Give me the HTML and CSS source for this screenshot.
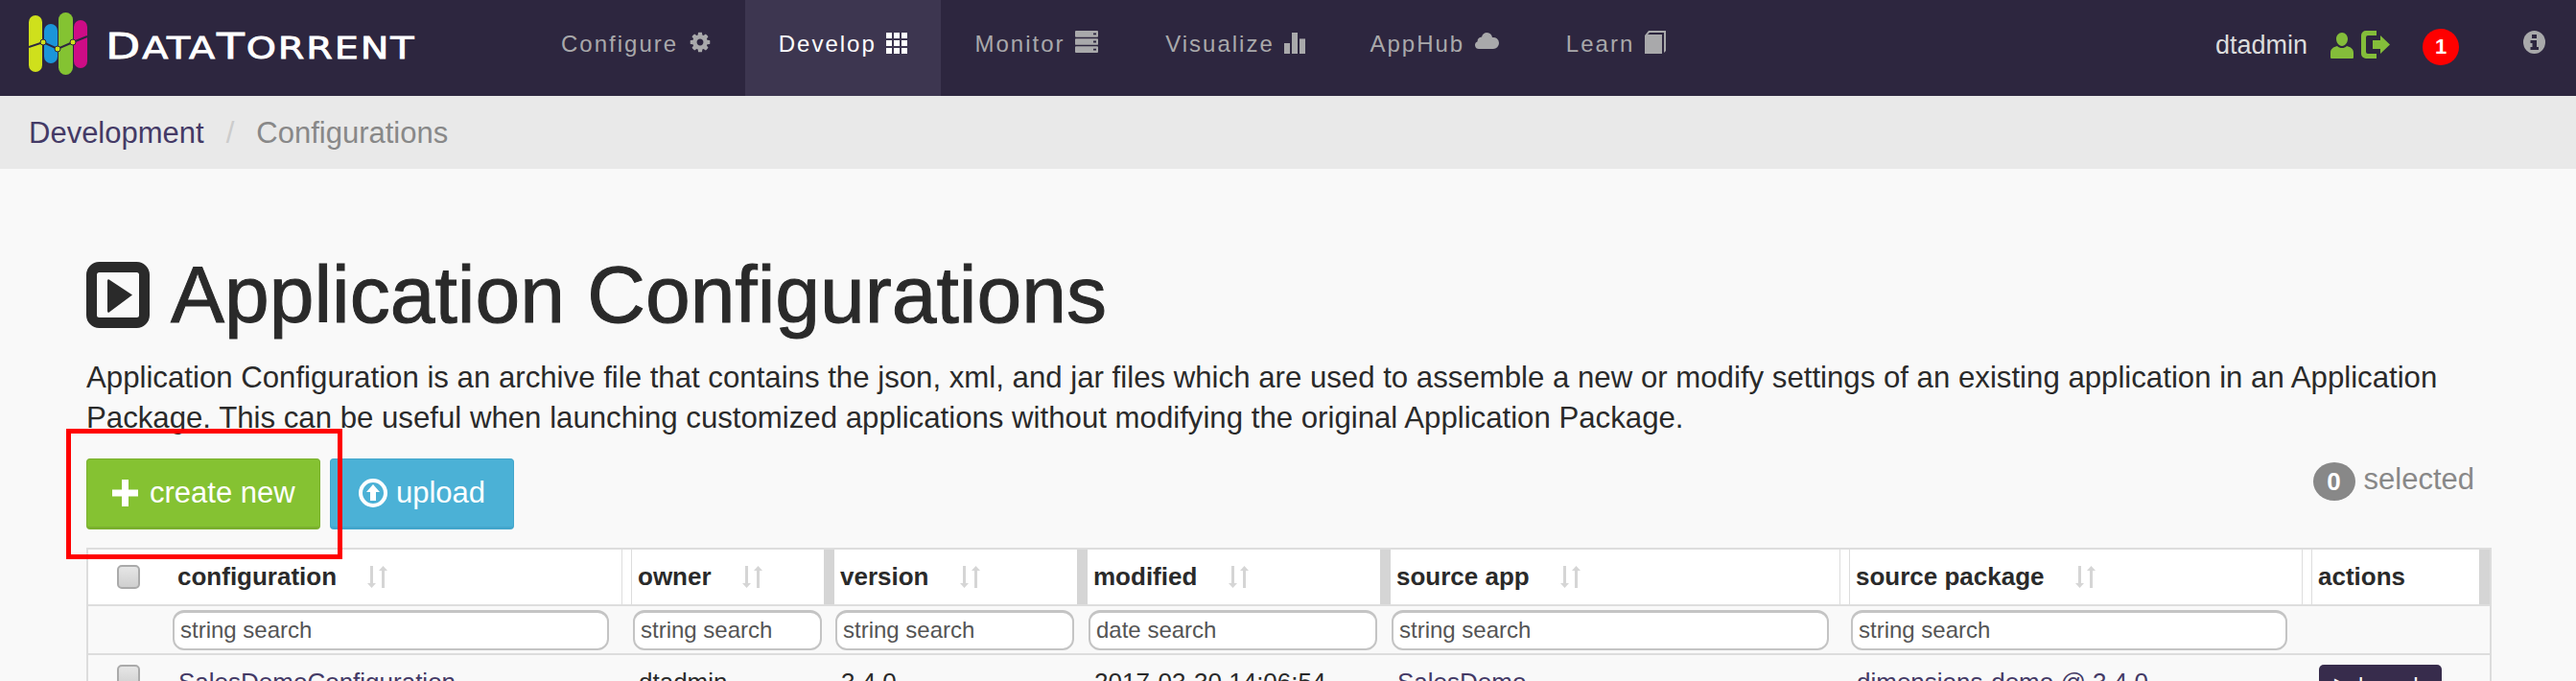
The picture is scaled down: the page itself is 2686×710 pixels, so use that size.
FILE: index.html
```html
<!DOCTYPE html>
<html lang="en">
<head>
  <meta charset="UTF-8">
  <title>Application Configurations</title>
  <link rel="stylesheet" href="styles.css">
</head>
<body>
  <nav class="navbar">
    <a class="brand">
      <svg class="brand-mark" width="62" height="68" viewBox="0 0 62 68">
        <rect x="0" y="3" width="14" height="59" rx="7" fill="#cfe01c"/>
        <rect x="16" y="12" width="14" height="41" rx="7" fill="#1b95d9"/>
        <rect x="31" y="0" width="15" height="65" rx="7.500" fill="#84c332"/>
        <rect x="47" y="8" width="14" height="50" rx="7" fill="#ce0c86"/>
        <polyline points="0,36 15,31 30,38 46,31 61,25" fill="none" stroke="#2d263f" stroke-width="2"/>
        <circle cx="15" cy="31" r="3" fill="#cfe01c" stroke="#2d263f"/>
        <circle cx="30" cy="38" r="3" fill="#cfe01c" stroke="#2d263f"/>
        <circle cx="46" cy="31" r="3" fill="#cfe01c" stroke="#2d263f"/>
      </svg>
      <span class="brand-name"><span class="brand-cap">D</span>ATA<span class="brand-cap">T</span>ORRENT</span>
    </a>
    <ul class="nav-links">
      <li class="nav-item">Configure
        <svg class="nav-icon nav-icon-up" width="24" height="24" viewBox="0 0 1792 1792"><path fill="currentColor" d="M1152 896q0-106-75-181t-181-75-181 75-75 181 75 181 181 75 181-75 75-181zm512-109v222q0 12-8 23t-20 13l-185 28q-19 54-39 91 35 50 107 138 10 12 10 25t-9 23q-27 37-99 108t-94 71q-12 0-26-9l-138-108q-44 23-91 38-16 136-29 186-7 28-36 28h-222q-14 0-24.500-8.500t-11.500-21.500l-28-184q-49-16-90-37l-141 107q-10 9-25 9-14 0-25-11-126-114-165-168-7-10-7-23 0-12 8-23 15-21 51-66.500t54-70.500q-27-50-41-99l-183-27q-13-2-21-12.500t-8-23.500v-222q0-12 8-23t19-13l186-28q14-46 39-92-40-57-107-138-10-12-10-24 0-10 9-23 26-36 98.500-107.500t94.500-71.500q13 0 26 10l138 107q44-23 91-38 16-136 29-186 7-28 36-28h222q14 0 24.500 8.500t11.500 21.500l28 184q49 16 90 37l142-107q9-9 24-9 13 0 25 10 129 119 165 170 7 8 7 22 0 12-8 23-15 21-51 66.500t-54 70.500q26 50 41 98l183 28q13 2 21 12.500t8 23.500z"/></svg>
      </li>
      <li class="nav-item active">Develop
        <svg class="nav-icon" width="22" height="22" viewBox="0 0 22 22" fill="currentColor">
          <rect width="6" height="6"/><rect x="8" width="6" height="6"/><rect x="16" width="6" height="6"/>
          <rect y="8" width="6" height="6"/><rect x="8" y="8" width="6" height="6"/><rect x="16" y="8" width="6" height="6"/>
          <rect y="16" width="6" height="6"/><rect x="8" y="16" width="6" height="6"/><rect x="16" y="16" width="6" height="6"/>
        </svg>
      </li>
      <li class="nav-item">Monitor
        <svg class="nav-icon nav-icon-up" width="24" height="23" viewBox="0 0 24 24" preserveAspectRatio="none">
          <path fill="currentColor" fill-rule="evenodd" d="M1 0h22a1 1 0 0 1 1 1v5a1 1 0 0 1-1 1H1a1 1 0 0 1-1-1V1a1 1 0 0 1 1-1zm18 2.500v2h3v-2zM1 8.500h22a1 1 0 0 1 1 1v5a1 1 0 0 1-1 1H1a1 1 0 0 1-1-1v-5a1 1 0 0 1 1-1zm18 2.500v2h3v-2zM1 17h22a1 1 0 0 1 1 1v5a1 1 0 0 1-1 1H1a1 1 0 0 1-1-1v-5a1 1 0 0 1 1-1zm18 2.500v2h3v-2z"/>
        </svg>
      </li>
      <li class="nav-item">Visualize
        <svg class="nav-icon" width="22" height="22" viewBox="0 0 22 24" preserveAspectRatio="none" fill="currentColor">
          <rect x="0" y="12" width="6" height="12"/><rect x="8" y="0" width="6" height="24"/><rect x="16" y="7" width="6" height="17"/>
        </svg>
      </li>
      <li class="nav-item nav-item-tight">AppHub
        <svg class="nav-icon" width="25" height="17" viewBox="0 0 25 17">
          <path fill="currentColor" d="M4 17a4 4 0 0 1-1.500-7.700A5 5 0 0 1 7 4.500 6 6 0 0 1 12.500 0 6 6 0 0 1 18 5a6 6 0 0 1 7 6 6 6 0 0 1-6 6z"/>
        </svg>
      </li>
      <li class="nav-item">Learn
        <svg class="nav-icon nav-icon-up" width="22" height="24" viewBox="0 0 22 24">
          <path fill="currentColor" d="M0 5l4-5h18v21l-2 2V2H5L3 4h15v20H0z"/>
        </svg>
      </li>
    </ul>
    <div class="nav-user">
      <span class="user-name">dtadmin</span>
      <svg class="user-icon" width="24" height="27" viewBox="0 0 24 27">
        <path fill="#84bd3a" d="M12 0c3.500 0 6 3 6 6.500S15.500 14 12 14 6 10 6 6.500 8.500 0 12 0zM7 14c1.500 1.500 3 2 5 2s3.500-.5 5-2c4 1 7 3 7 7v4.500c0 1-.5 1.500-1.500 1.500h-21C.5 27 0 26.500 0 25.500V21c0-4 3-6 7-7z"/>
      </svg>
      <svg class="logout-icon" width="30" height="29" viewBox="0 0 30 29">
        <path fill="#84bd3a" d="M5 0h11v5H7a2 2 0 0 0-2 2v15a2 2 0 0 0 2 2h9v5H5a5 5 0 0 1-5-5V5a5 5 0 0 1 5-5z"/>
        <path fill="#84bd3a" d="M12 10h8V5l10 9.500L20 24v-5h-8z"/>
      </svg>
      <span class="alert-badge">1</span>
      <svg class="info-icon" width="23" height="24" viewBox="0 0 23 24">
        <ellipse cx="11.500" cy="12" rx="11.500" ry="12" fill="#a9a9ab"/>
        <path fill="#2d263f" d="M9 4h5v4H9zM7.500 10H14v7h2v3H7.500v-3h2v-4h-2z"/>
      </svg>
    </div>
  </nav>

  <div class="breadcrumb">
    <a class="crumb-link">Development</a>
    <span class="crumb-sep">/</span>
    <span class="crumb-current">Configurations</span>
  </div>

  <main class="content">
    <h1 class="page-title">
      <svg width="66" height="69" viewBox="0 0 66 69">
        <rect x="5.500" y="5.500" width="55" height="58" rx="8" fill="none" stroke="#2a2a2a" stroke-width="11"/>
        <path fill="#2a2a2a" d="M22 20c0-2 1.500-2.500 2.500-1L48 34.500 24.500 52c-1 1.500-2.500 1-2.500-1z"/>
      </svg>
      Application Configurations
    </h1>
    <p class="page-desc">Application Configuration is an archive file that contains the json, xml, and jar files which are used to assemble a new or modify settings of an existing application in an Application Package. This can be useful when launching customized applications without modifying the original Application Package.</p>

    <div class="toolbar">
      <div class="toolbar-btns">
        <button class="btn btn-green">
          <svg width="27" height="28" viewBox="0 0 27 28"><path fill="#fff" d="M10 0h7v10.500h10v7H17V28h-7V17.500H0v-7h10z"/></svg>
          create new
        </button>
        <button class="btn btn-blue">
          <svg width="30" height="30" viewBox="0 0 30 30">
            <circle cx="15" cy="15" r="13" fill="none" stroke="#fff" stroke-width="4"/>
            <path fill="#fff" d="M15 6l7 8h-4v9h-6v-9H8z"/>
          </svg>
          upload
        </button>
        <div class="highlight-box"></div>
      </div>
      <div class="selected-count"><span class="count-badge">0</span><span class="count-label">selected</span></div>
    </div>

    <table class="config-table">
      <thead>
        <tr class="head-row">
          <th class="col-check"><span class="checkbox"></span></th>
          <th class="col-config handle-thin">configuration <svg class="sort-icon" width="22" height="23" viewBox="0 0 22 23"><path d="M3 0h3v18h3l-4.500 5L0 18h3zM15 23h3V5h3l-4.500-5L12 5h3z"/></svg></th>
          <th class="col-owner handle-thick">owner <svg class="sort-icon" width="22" height="23" viewBox="0 0 22 23"><path d="M3 0h3v18h3l-4.500 5L0 18h3zM15 23h3V5h3l-4.500-5L12 5h3z"/></svg></th>
          <th class="col-version handle-thick">version <svg class="sort-icon" width="22" height="23" viewBox="0 0 22 23"><path d="M3 0h3v18h3l-4.500 5L0 18h3zM15 23h3V5h3l-4.500-5L12 5h3z"/></svg></th>
          <th class="col-modified handle-thick">modified <svg class="sort-icon" width="22" height="23" viewBox="0 0 22 23"><path d="M3 0h3v18h3l-4.500 5L0 18h3zM15 23h3V5h3l-4.500-5L12 5h3z"/></svg></th>
          <th class="col-app handle-thin">source app <svg class="sort-icon" width="22" height="23" viewBox="0 0 22 23"><path d="M3 0h3v18h3l-4.500 5L0 18h3zM15 23h3V5h3l-4.500-5L12 5h3z"/></svg></th>
          <th class="col-package handle-thin">source package <svg class="sort-icon" width="22" height="23" viewBox="0 0 22 23"><path d="M3 0h3v18h3l-4.500 5L0 18h3zM15 23h3V5h3l-4.500-5L12 5h3z"/></svg></th>
          <th class="col-actions handle-thick">actions</th>
        </tr>
      </thead>
      <tbody>
        <tr class="filter-row">
          <td></td>
          <td><input class="filter filter-config" placeholder="string search"></td>
          <td><input class="filter filter-owner" placeholder="string search"></td>
          <td><input class="filter filter-version" placeholder="string search"></td>
          <td><input class="filter filter-modified" placeholder="date search"></td>
          <td><input class="filter filter-app" placeholder="string search"></td>
          <td><input class="filter filter-package" placeholder="string search"></td>
          <td></td>
        </tr>
        <tr class="data-row">
          <td class="cell-check"><span class="checkbox"></span></td>
          <td><a class="row-link">SalesDemoConfiguration</a></td>
          <td>dtadmin</td>
          <td>3.4.0</td>
          <td>2017-03-30 14:06:54</td>
          <td><a class="row-link">SalesDemo</a></td>
          <td><a class="row-link">dimensions-demo @ 3.4.0</a></td>
          <td class="cell-launch"><button class="btn-launch">&#9654; launch</button></td>
        </tr>
      </tbody>
    </table>
  </main>
</body>
</html>
```

FILE: styles.css
```css
html, body {
  margin: 0;
  height: 100%;
  overflow: hidden;
}
body {
  background: #f9f9f9;
  color: #2a2a2a;
  font-family: "Liberation Sans", Arial, sans-serif;
  font-size: 31px;
}

/* top bar */
.navbar {
  display: flex;
  height: 100px;
  padding-left: 30px;
  padding-right: 32px;
  background: #2d263f;
}
.brand {
  display: flex;
  align-items: flex-start;
  width: 520px;
  padding-top: 13px;
}
.brand-name {
  margin-left: 18px;
  margin-top: 15px;
  color: #fff;
  font-family: "DejaVu Sans", sans-serif;
  font-size: 32px;
  line-height: 40px;
  letter-spacing: 1.500px;
  white-space: nowrap;
  -webkit-text-stroke: 0.8px #fff;
  transform: scaleX(1.24);
  transform-origin: left;
}
.brand-cap {
  font-size: 38px;
}
.nav-links {
  display: flex;
  margin: 0;
  padding: 0;
  list-style: none;
}
.nav-item {
  padding: 31px 35px 0;
  color: #a9a9ab;
  font-size: 24px;
  line-height: 30px;
  letter-spacing: 2px;
}
.nav-item-tight {
  padding-left: 32px;
}
.nav-item.active {
  background: #3d3650;
  color: #fff;
}
.nav-icon {
  margin-left: 2px;
  margin-top: 3px;
  vertical-align: top;
}
.nav-icon-up {
  margin-top: 1px;
}
.nav-user {
  display: flex;
  align-items: flex-start;
  margin-left: auto;
  padding-top: 32px;
}
.user-name {
  color: #dcdcdc;
  font-size: 27px;
  line-height: 30px;
}
.user-icon {
  margin-left: 24px;
  margin-top: 2px;
}
.logout-icon {
  margin-left: 8px;
}
.alert-badge {
  width: 38px;
  height: 38px;
  margin-left: 34px;
  margin-top: -2px;
  border-radius: 50%;
  background: #f00;
  color: #fff;
  font-size: 22px;
  font-weight: bold;
  line-height: 38px;
  text-align: center;
}
.info-icon {
  margin-left: 67px;
}

/* breadcrumb */
.breadcrumb {
  display: flex;
  height: 76px;
  padding-left: 30px;
  background: #e9e9e9;
  line-height: 78px;
}
.crumb-link {
  color: #443a66;
}
.crumb-sep {
  margin: 0 23px;
  color: #ccc;
}
.crumb-current {
  color: #888;
}

/* page head */
.content {
  padding: 97px 89px 0 90px;
}
.page-title {
  display: flex;
  align-items: center;
  gap: 22px;
  height: 69px;
  margin: 0;
  font-size: 84px;
  font-weight: normal;
  line-height: 69px;
  -webkit-text-stroke: 1px #2a2a2a;
}
.page-desc {
  margin: 31px 0 21px;
  font-size: 31.200px;
  line-height: 42px;
}

/* buttons above the table */
.toolbar {
  display: flex;
  justify-content: space-between;
  align-items: flex-start;
  margin-bottom: 19px;
}
.toolbar-btns {
  display: flex;
  gap: 10px;
  position: relative;
}
.btn {
  display: flex;
  align-items: center;
  gap: 12px;
  height: 74px;
  padding: 0;
  border: 1px solid transparent;
  border-bottom-width: 3px;
  border-radius: 4px;
  color: #fff;
  font-family: inherit;
  font-size: 31px;
}
.btn-green {
  width: 244px;
  padding-left: 26px;
  background: #85c232;
  border-color: #7ab02e;
}
.btn-blue {
  width: 192px;
  padding-left: 29px;
  gap: 9px;
  background: #4bb1d6;
  border-color: #43a6cc;
}
.highlight-box {
  position: absolute;
  z-index: 1;
  left: -21px;
  top: -31px;
  width: 278px;
  height: 126px;
  border: 5px solid #f00;
}
.selected-count {
  display: flex;
  align-items: flex-start;
  gap: 9px;
  margin-top: 4px;
  margin-right: 17px;
  color: #888;
}
.count-badge {
  width: 44px;
  height: 40px;
  border-radius: 50%;
  background: #888;
  color: #fff;
  font-size: 26px;
  font-weight: bold;
  line-height: 40px;
  text-align: center;
}
.count-label {
  line-height: 36px;
}

/* table */
.config-table {
  table-layout: fixed;
  width: 2507px;
  border-collapse: collapse;
  border: 2px solid #ddd;
}
.head-row th {
  position: relative;
  box-sizing: border-box;
  height: 59px;
  padding: 0 0 0 6px;
  background: #fff;
  border-bottom: 2px solid #ddd;
  font-size: 26px;
  text-align: left;
}
.handle-thin::after,
.handle-thick::after {
  content: "";
  position: absolute;
  top: 0;
  bottom: 0;
  right: 0;
  box-sizing: border-box;
  width: 11px;
}
.handle-thin::after {
  border-left: 1px solid #ddd;
  border-right: 1px solid #ddd;
}
.handle-thick::after {
  background: #d5d5d5;
}
.col-check {
  width: 88px;
}
.col-config {
  width: 480px;
}
.col-owner {
  width: 211px;
}
.col-version {
  width: 264px;
}
.col-modified {
  width: 316px;
}
.col-app {
  width: 479px;
}
.col-package {
  width: 482px;
}
.col-actions {
  width: 186px;
}
.sort-icon {
  margin-left: 25px;
  vertical-align: -3px;
  fill: #d5d5d5;
}
.checkbox {
  display: block;
  box-sizing: border-box;
  width: 24px;
  height: 25px;
  margin-left: 24px;
  border: 2px solid #aaa;
  border-radius: 5px;
  background: linear-gradient(#e6e6e6, #cfcfcf);
}
.filter-row td {
  height: 49px;
  padding: 0 0 0 1px;
  border-bottom: 2px solid #ddd;
}
.filter {
  display: block;
  box-sizing: border-box;
  height: 42px;
  padding: 0 6px;
  border: 2px solid #c4c4c4;
  border-top-width: 3px;
  border-radius: 12px;
  background: #fff;
  font-family: inherit;
  font-size: 24px;
}
.filter::placeholder {
  color: #555;
  opacity: 1;
}
.filter-config {
  width: 455px;
}
.filter-owner {
  width: 197px;
}
.filter-version {
  width: 249px;
}
.filter-modified {
  width: 301px;
}
.filter-app {
  width: 456px;
}
.filter-package {
  width: 455px;
}
.data-row td {
  padding: 13px 0 11px 7px;
  font-size: 26px;
  line-height: 30px;
  vertical-align: top;
}
.data-row .cell-check {
  padding: 10px 0 0 6px;
}
.data-row .cell-launch {
  padding-top: 10px;
}
.row-link {
  color: #443a66;
}
.btn-launch {
  display: block;
  width: 128px;
  height: 50px;
  padding: 0 0 6px;
  border: 0;
  border-radius: 5px;
  background: #372c4c;
  color: #fff;
  font-family: inherit;
  font-size: 24px;
}
```
